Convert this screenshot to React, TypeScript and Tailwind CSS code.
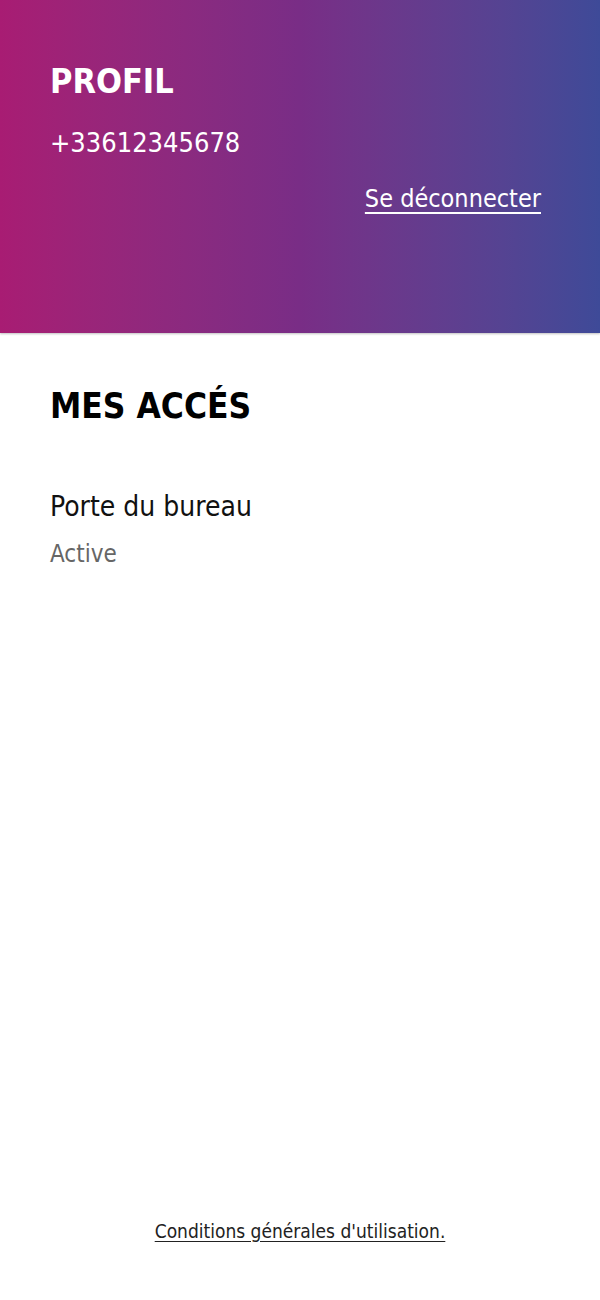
/**
 * Profil - écran simple : en-tête dégradé, liste des accès, lien CGU en bas
 */

const FONT = "font-['DejaVu_Sans_Condensed','Liberation_Sans',sans-serif]"

export default function App() {
  return (
    <div className={`min-h-screen flex flex-col bg-white ${FONT}`}>
      {/* ── En-tête ─────────────────────────────── */}
      <header className="h-[333px] bg-gradient-to-r from-[#a81c73] via-[#792d86] to-[#3e4a98] px-[50px] pt-[61px] text-white shadow-[0_1px_2px_rgba(0,0,0,0.25)]">
        <h1 className="text-[34px] font-bold leading-[40px]">PROFIL</h1>
        <p className="mt-[26px] text-[27px] leading-[32px]">+33612345678</p>
        <div className="mt-[25px] flex justify-end pr-[9px]">
          <button className="text-[25px] leading-[30px] underline underline-offset-[5px] decoration-[1.5px]">
            Se déconnecter
          </button>
        </div>
      </header>

      {/* ── Mes accès ───────────────────────────── */}
      <section className="flex-1 px-[50px] pt-[52px]">
        <h2 className="text-[35px] font-bold leading-[42px] text-black">MES ACCÉS</h2>
        <div className="mt-[63px]">
          <p className="text-[28px] leading-[34px] text-[#111]">Porte du bureau</p>
          <p className="mt-[15px] text-[24px] leading-[30px] font-light text-[#666]">Active</p>
        </div>
      </section>

      {/* ── Pied de page ────────────────────────── */}
      <footer className="pb-[57px] flex justify-center">
        <a className="text-[19px] leading-[24px] text-[#222] underline underline-offset-[3px]">
          Conditions générales d'utilisation.
        </a>
      </footer>
    </div>
  )
}
